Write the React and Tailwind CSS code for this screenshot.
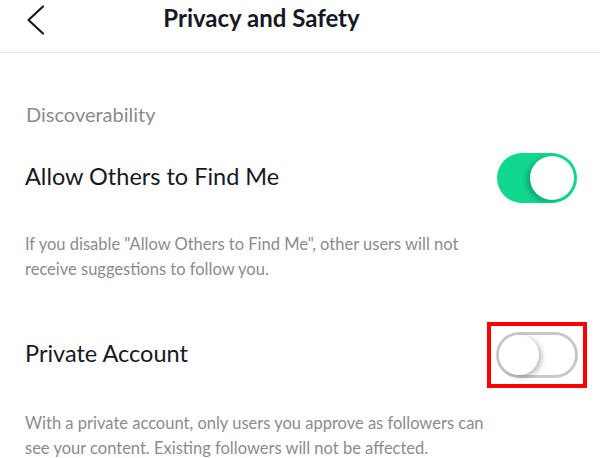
function Toggle({ on }) {
  if (on) {
    return (
      <div className="flex h-[50px] w-[80px] items-center justify-end rounded-full bg-[#12d88f] p-[3px]">
        <div className="h-[44px] w-[44px] rounded-full bg-white shadow-[-4px_2px_5px_rgba(0,90,50,0.35)]" />
      </div>
    );
  }
  return (
    <div className="flex h-[46px] w-[82px] items-center rounded-full border-[3px] border-[#c8c8ca] bg-white">
      <div className="h-[40px] w-[40px] rounded-full bg-white shadow-[3px_2px_5px_rgba(0,0,0,0.25)]" />
    </div>
  );
}

export default function App() {
  return (
    <main
      className="h-[458px] w-[600px] overflow-hidden bg-white text-[#161823]"
      style={{ fontFamily: "Lato, 'Liberation Sans', sans-serif" }}
    >
      <header className="relative flex h-[53px] justify-center border-b border-[#e3e3e4] pr-[77px] pt-[3px]">
        <svg
          className="absolute left-[24px] top-[3px]"
          width="24"
          height="34"
          viewBox="0 0 24 34"
          fill="none"
          stroke="#161823"
          strokeWidth="2.2"
          strokeLinecap="round"
          strokeLinejoin="round"
        >
          <polyline points="19,3.5 4.5,17 19,30.5" />
        </svg>
        <h1 className="text-[24px] font-bold leading-[30px]">Privacy and Safety</h1>
      </header>

      <section className="px-[25px]">
        <p className="pt-[49px] pl-[1px] text-[20px] leading-[24px] text-[#8a8b91]">Discoverability</p>

        <div className="mt-[27px] flex items-center justify-between">
          <span className="-mt-[3px] text-[23.5px]">Allow Others to Find Me</span>
          <div className="mr-[-2px]">
            <Toggle on />
          </div>
        </div>

        <p className="mt-[29px] text-[16.5px] leading-[25px] text-[#8a8b91]">
          If you disable "Allow Others to Find Me", other users will not
          <br />
          receive suggestions to follow you.
        </p>

        <div className="mt-[40px] flex items-center justify-between">
          <span className="-mt-[2px] text-[23.5px]">Private Account</span>
          <div className="mr-[-12px] border-[4px] border-[#ff0000] px-[5px] py-[6px]">
            <Toggle />
          </div>
        </div>

        <p className="mt-[23px] text-[16.5px] leading-[25px] text-[#8a8b91]">
          With a private account, only users you approve as followers can
          <br />
          see your content. Existing followers will not be affected.
        </p>
      </section>
    </main>
  );
}
